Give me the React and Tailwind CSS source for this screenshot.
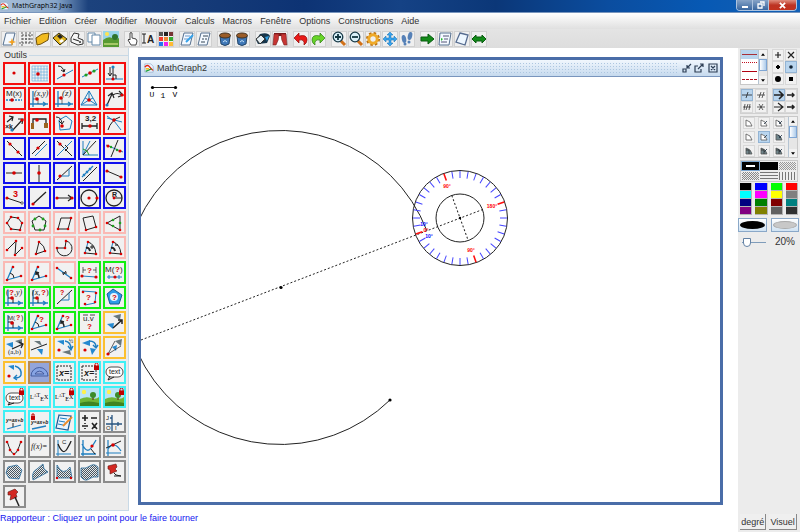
import React, { useState } from 'react';
import clsx from 'clsx';

const RED = '#d80000';
const BLUE = '#1f7fc0';
const INK = '#222222';
const GREEN = '#1fa01f';

// Small drawing helpers shared by every icon
const S = ({ d, c = INK, w = 1, f = 'none', dash }) => (
  <path d={d} stroke={c} strokeWidth={w} fill={f} strokeDasharray={dash} />
);

const D = ({ p, c = RED, r = 1.6 }) => (
  <>
    {p.map(([x, y], i) => (
      <circle key={i} cx={x} cy={y} r={r} fill={c} />
    ))}
  </>
);

const T = ({ x, y, s = 8, c = INK, b, i, serif, children }) => (
  <text
    x={x}
    y={y}
    fontSize={s}
    fill={c}
    fontWeight={b ? 700 : 400}
    fontStyle={i ? 'italic' : 'normal'}
    fontFamily={serif ? 'Liberation Serif, serif' : 'Liberation Sans, sans-serif'}
  >
    {children}
  </text>
);

const Axes = () => <S d="M5 4V20M2 17H20M15 15L18 17L15 19" c={BLUE} w={1.3} />;
const Lock = () => (
  <>
    <S d="M17 5V3.5a1.5 1.5 0 0 1 3 0V5" c="#c00000" />
    <rect x="16" y="4.500" width="5" height="4.500" fill="#c00000" />
  </>
);
const Landscape = () => (
  <>
    <rect x="2" y="2" width="19" height="19" fill="#b9e4f6" />
    <circle cx="6" cy="6" r="2.200" fill="#fff04a" />
    <path d="M2 13Q8 10 13 12T21 11V21H2Z" fill="#6fb536" />
    <path d="M2 17Q10 14 21 17V21H2Z" fill="#3f8420" />
    <path d="M15 14V9" stroke="#6b4a20" strokeWidth="1.500" />
    <circle cx="15" cy="9" r="3" fill="#3c8b2a" />
  </>
);
const Triangle = ({ d, c = '#2589d0' }) => <path d={d} fill={c} />;
const Hatch = ({ d }) => (
  <>
    <path d={d} fill="url(#hatch)" />
    <S d={d} c="#2a6c9c" w={0.8} />
  </>
);
const Box = () => <S d="M4 5H18V19H4Z" dash="2 1" />;
const Latex = () => (
  <T x={2} y={13} s={6} c="#000" serif>
    L<tspan dy="-2" fontSize="4">A</tspan>T<tspan dy="4">E</tspan><tspan dy="-2">X</tspan>
  </T>
);

const R = 'border-[#f50f0f]';
const B = 'border-[#1010ee]';
const P = 'border-[#fab9b4]';
const G = 'border-[#12ee12]';
const O = 'border-[#fcc030]';
const C = 'border-[#3ff0f5]';
const N = 'border-[#8c8c8c]';

const tools = [
  [R, 'Point libre', <D p={[[11, 11]]} />],
  [R, 'Point sur grille', <><S d="M4 4H20M4 7H20M4 10H20M4 13H20M4 16H20M4 19H20M4 4V19M7 4V19M10 4V19M13 4V19M16 4V19M19 4V19" c="#5ba8dc" w={0.6} /><D p={[[10, 12]]} r={1.8} /></>],
  [R, 'Point lié', <><S d="M5 4Q10 4 11 10M8 8L11 10L12 7" /><S d="M4 17L20 8" c={BLUE} /><D p={[[11, 13]]} /></>],
  [R, 'Point sur droite', <><S d="M4 15L20 7" c={BLUE} /><D p={[[8, 13], [16, 9]]} c={GREEN} /><D p={[[12, 11]]} r={1.8} /></>],
  [R, 'Projeté', <><S d="M3 17H20" c={BLUE} /><S d="M7 5V14M10 6V16M5 11L7 14L9 11M10 13H13V17" /><D p={[[10, 5]]} c={BLUE} /><D p={[[10, 17]]} /></>],

  [R, 'Point par abscisse', <><T x={3} y={9}>M(x)</T><S d="M3 13H19" c={BLUE} dash="2 1" w={1.3} /><D p={[[9, 13]]} r={1.8} /></>],
  [R, 'Point par coordonnées', <><Axes /><T x={6} y={9} i serif>(x,y)</T><S d="M5 12H10V17" w={0.6} /><D p={[[9, 12]]} r={1.8} /></>],
  [R, 'Point par affixe', <><Axes /><T x={9} y={9} s={9} i serif>(z)</T><S d="M5 11H9V17" w={0.6} /><D p={[[8, 11]]} r={1.8} /></>],
  [R, 'Barycentre', <><S d="M11 4L3 18H19ZM11 4V13L3 18M11 13L19 18M7 11L11 13L15 11" c={BLUE} /><D p={[[11, 13]]} r={1.8} /></>],
  [R, 'Image de point', <><S d="M4 18L9 7M5 9L9 6L11 11M10 8Q14 5 19 8M16 4L20 8L15 10" w={1.2} /><D p={[[4, 18]]} c={BLUE} /><D p={[[19, 8]]} /></>],

  [R, 'Homothétie de vecteur', <><S d="M4 10L10 5M6 4L10 5L9 9M9 19L20 7M15 7L20 7L19 12" w={1.2} /><T x={2} y={17} s={7} b>×k</T><D p={[[9, 18]]} c={BLUE} /><D p={[[19, 8]]} /></>],
  [R, 'Équilibre', <><S d="M5 12V7H18V12" w={1.3} /><D p={[[9, 8]]} r={1.8} /><rect x="3" y="11" width="3" height="6" fill="#9a6420" /><rect x="16" y="11" width="4" height="5" fill="#9a6420" /></>],
  [R, 'Point intérieur', <><S d="M6 8L13 4L19 9L17 17L7 18Z" c={BLUE} /><S d="M3 5Q8 5 9 11M6 9L9 12L11 9" /><D p={[[9, 14]]} r={1.8} /></>],
  [R, 'Mesure', <><T x={7} y={9} s={8} b>3,2</T><S d="M4 14H19M4 11V17M19 11V17" w={1.3} /><D p={[[12, 14]]} r={1.8} /></>],
  [R, 'Intersection', <><S d="M4 6L19 10M4 4Q12 8 18 18" c={BLUE} /><S d="M17 5Q8 8 5 18" /><D p={[[11, 8]]} r={1.8} /></>],

  [B, 'Droite par deux points', <><S d="M4 4L19 19" /><D p={[[7, 7], [15, 15]]} /></>],
  [B, 'Parallèle', <><S d="M4 17L17 4" /><S d="M7 19L19 7" c={BLUE} /><D p={[[10, 11]]} /></>],
  [B, 'Perpendiculaire', <><S d="M4 4L19 19" /><S d="M4 19L19 4" c={BLUE} /><S d="M12 8L15 11L12 14" /><D p={[[7, 7]]} /></>],
  [B, 'Bissectrice', <><S d="M5 4V18H20M5 18L12 4" c={BLUE} /><S d="M5 18L18 4" /><S d="M5 12Q10 13 11 18" c={GREEN} /></>],
  [B, 'Médiatrice', <><S d="M3 8L20 15" c={BLUE} /><S d="M15 3L8 20" /><D p={[[5, 9], [17, 14]]} /><D p={[[8, 10], [14, 13]]} c={GREEN} r={1.2} /></>],

  [B, 'Horizontale', <><S d="M3 11H19" /><D p={[[11, 11]]} r={1.8} /></>],
  [B, 'Verticale', <><S d="M11 3V20" /><D p={[[11, 11]]} r={1.8} /></>],
  [B, 'Droite par pente', <><S d="M4 18L19 4" /><S d="M7 14H16V7" c={BLUE} /><D p={[[7, 14]]} /></>],
  [B, 'Droite par équation', <><S d="M5 19L19 5" /><S d="M4 15L15 4M5 12L7 14M8 9L10 11M11 6L13 8" c={BLUE} w={1.3} /></>],
  [B, 'Segment', <><S d="M4 9L18 15" /><D p={[[4, 9], [18, 15]]} /></>],

  [B, 'Segment de longueur donnée', <><T x={10} y={10} s={9} b c={RED}>3</T><S d="M4 11L19 16" /><D p={[[4, 11]]} /><circle cx="19" cy="16" r="1.200" fill="#fff" stroke={INK} strokeWidth=".7" /></>],
  [B, 'Demi-droite', <><S d="M5 17L18 5" w={1.2} /><D p={[[5, 17]]} /></>],
  [B, 'Vecteur', <><S d="M4 11H19M15 8L19 11L15 14" w={1.2} /><D p={[[4, 11], [19, 11]]} /></>],
  [B, 'Cercle par point', <><circle cx="11" cy="11" r="8" fill="none" stroke={INK} strokeWidth="1.300" /><D p={[[11, 11], [19, 11]]} /></>],
  [B, 'Cercle par rayon', <><circle cx="11" cy="11" r="8" fill="none" stroke={INK} strokeWidth="1.300" /><S d="M11 11H19" /><T x={9} y={10} s={7} b>R</T><D p={[[11, 11]]} r={1.4} /></>],

  [P, 'Polygone', <><S d="M8 5L15 6L19 11L17 18L8 17L4 11Z" /><D p={[[8, 5], [15, 6], [19, 11], [17, 18], [8, 17], [4, 11]]} r={1.3} /></>],
  [P, 'Polygone régulier', <><S d="M11 4L18 9L16 18H7L4 9Z" /><D p={[[7, 7], [15, 7], [17, 14], [12, 18], [5, 14]]} c={GREEN} r={1.4} /></>],
  [P, 'Parallélogramme', <><S d="M8 6H18L15 17H5Z" /><D p={[[18, 6], [15, 17], [5, 17]]} r={1.3} /></>],
  [P, 'Carré', <><S d="M5 6L15 4L18 15L8 18Z" /><D p={[[8, 18], [18, 15]]} r={1.3} /></>],
  [P, 'Triangle équilatéral', <><S d="M4 11L17 4V18Z" /><D p={[[4, 11], [17, 18]]} r={1.3} /><D p={[[10, 8], [10, 14], [17, 11]]} c={GREEN} r={1.3} /></>],

  [P, 'Ligne brisée', <><S d="M4 13L13 4L12 18L19 11" /><D p={[[4, 13], [13, 4], [12, 18], [19, 11]]} r={1.3} /></>],
  [P, 'Arc de cercle', <><S d="M11 5Q17 9 17 14L8 17L11 5" /><D p={[[11, 5], [17, 14], [8, 17]]} r={1.3} /></>],
  [P, 'Grand arc', <><S d="M4 11A7.500 7.500 0 1 0 13 4L12 11Z" /><D p={[[13, 4], [12, 11], [4, 11]]} r={1.3} /></>],
  [P, 'Arc direct', <><S d="M10 5Q17 7 18 17L7 16" /><S d="M10 5L7 16" c={BLUE} /><S d="M14 8V12M12 10H16" /><S d="M8 11Q11 10 12 14" w={2} /><D p={[[10, 5], [7, 16], [18, 17]]} r={1.3} /></>],
  [P, 'Arc indirect', <><S d="M10 5Q17 7 18 17L7 16" /><S d="M10 5L7 16" c={BLUE} /><S d="M8 11Q11 10 12 14" w={2} /><S d="M12 8H15" w={1.2} /><D p={[[10, 5], [7, 16], [18, 17]]} r={1.3} /></>],

  [P, 'Angle', <><S d="M4 18L10 4M4 18L18 14" c={BLUE} w={1.3} /><S d="M7 11Q11 12 11 16" /><D p={[[10, 5], [4, 18], [18, 14]]} r={1.3} /></>],
  [P, 'Angle orienté', <><S d="M4 18L10 4M4 18L18 14" c={BLUE} w={1.3} /><S d="M8 11Q11 12 11 16M8 13L8 10L11 11" w={1.5} /><D p={[[10, 5], [4, 18], [18, 14]]} r={1.3} /></>],
  [P, 'Marque de segment', <><S d="M4 6L18 16" c={BLUE} w={1.3} /><S d="M10 13L13 9M9 11L14 11" /><D p={[[4, 6], [18, 16]]} r={1.3} /></>],
  [G, 'Longueur', <><S d="M5 8H8M15 8H18M5 5V11M18 5V11" w={0.7} /><T x={9} y={11} s={8} b c={RED}>?</T><S d="M4 14L18 15" c={BLUE} /><D p={[[4, 14], [18, 15]]} /></>],
  [G, 'Abscisse', <><T x={2} y={10} s={8}>M(</T><T x={12} y={10} s={8} b c={RED}>?</T><T x={17} y={10} s={8}>)</T><S d="M4 15H19M6 13V17M16 13V17" c={BLUE} /><D p={[[12, 15]]} /></>],

  [G, "Abscisse d'un point", <><Axes /><T x={6} y={9} b c={RED}>?</T><T x={3} y={9} serif>(</T><T x={11} y={9} i serif>,y)</T><S d="M5 12H10V17" /><D p={[[9, 12]]} r={1.8} /></>],
  [G, "Ordonnée d'un point", <><Axes /><T x={4} y={9} i serif>(x,</T><T x={13} y={9} b c={RED}>?</T><T x={18} y={9} serif>)</T><S d="M5 12H10V17" /><D p={[[9, 12]]} r={1.8} /></>],
  [G, 'Pente', <><S d="M4 18L19 4" /><S d="M8 14H16V7" c={BLUE} /><T x={7} y={9} b c={RED} s={7}>?</T></>],
  [G, 'Longueur de ligne', <><S d="M4 5L18 6L17 17L7 19" c={BLUE} /><T x={8} y={14} b c={RED}>?</T><D p={[[5, 6], [18, 7], [17, 16], [7, 18]]} r={1.3} /></>],
  [G, 'Aire', <><path d="M10 3L19 9L16 18L7 18L4 8Z" fill="#2d9be8" stroke="#155c92" /><circle cx="11" cy="11" r="4" fill="#e8f4fc" /><T x={9} y={14} b c={RED}>?</T></>],

  [G, 'Affixe', <><Axes /><T x={5} y={9} s={6}>M(</T><T x={13} y={9} s={7} b c={RED}>?</T><T x={18} y={9} s={7}>)</T><S d="M5 11H10V17" /><D p={[[9, 12]]} r={1.8} /></>],
  [G, "Mesure d'angle", <><S d="M4 18L10 4M4 18L18 14" c={BLUE} w={1.3} /><T x={11} y={11} s={8} b c={RED}>?</T><S d="M7 11Q11 12 11 16" /><D p={[[10, 5], [4, 18], [18, 14]]} r={1.3} /></>],
  [G, "Mesure d'angle orienté", <><S d="M4 18L10 4M4 18L18 14" c={BLUE} w={1.3} /><T x={12} y={10} s={8} b c={RED}>?</T><S d="M8 11Q11 12 11 16M8 13V10L11 11" w={1.4} /><D p={[[10, 5], [4, 18], [18, 14]]} r={1.3} /></>],
  [G, 'Produit scalaire', <><T x={5} y={10} s={8}>u.v</T><S d="M5 4H10M12 4H17" w={0.8} /><T x={9} y={18} s={8} b c={RED}>?</T></>],
  [O, 'Translation', <><Triangle d="M4 13L10 18L11 12Z" /><Triangle d="M10 5L17 9L18 3Z" c="#68777c" /><S d="M10 17L19 9M15 9H19V13" w={1.5} /></>],

  [O, 'Translation par vecteur', <><Triangle d="M3 8L10 12L10 6Z" /><Triangle d="M12 5L19 9V3Z" c="#68777c" /><S d="M9 13L20 8M16 6L20 8L18 12" w={1.3} /><T x={5} y={18} s={7} serif>(a,b)</T></>],
  [O, 'Symétrie axiale', <><Triangle d="M6 5L14 10L12 5Z" c="#68777c" /><S d="M3 14L19 8" /><Triangle d="M9 13L15 13L14 19Z" /></>],
  [O, 'Rotation', <><Triangle d="M4 5L11 9V4Z" /><S d="M12 5Q18 6 18 13M15 10L18 14L20 10" c={BLUE} w={1.4} /><Triangle d="M9 16L18 19L17 14Z" c="#68777c" /><D p={[[6, 14]]} /><T x={16} y={7} s={5}>½</T></>],
  [O, 'Rotation par angle', <><Triangle d="M4 7L12 10V4Z" /><S d="M11 5Q18 5 18 11M15 9L18 12L20 9" c={BLUE} w={1.4} /><Triangle d="M12 12L18 13L14 19Z" /><D p={[[7, 14]]} /></>],
  [O, 'Homothétie', <><Triangle d="M12 5L19 3L18 10Z" c="#68777c" /><Triangle d="M9 11L14 9L13 15Z" /><S d="M5 18L12 5M5 18L18 10" w={0.7} /><D p={[[5, 18]]} /></>],

  [O, 'Similitude', <><Triangle d="M5 5L11 9V4Z" /><S d="M12 5Q19 7 18 14Q17 17 12 17M14 14L11 17L14 19" c={BLUE} w={1.4} /><D p={[[6, 15]]} /></>],
  ['border-[#b98c50]', 'Rapporteur', <path fillRule="evenodd" d="M3 15A8.500 8.500 0 0 1 20 15ZM7 13A5 5 0 0 1 16 13Z" fill="#87a4e4" stroke="#334c91" strokeWidth=".8" />],
  [C, 'Valeur', <><Box /><T x={6} y={15} b i s={9}>x=</T></>],
  [C, 'Valeur protégée', <><Box /><T x={6} y={15} b i s={9}>x=</T><Lock /></>],
  [C, 'Texte', <><rect x="3" y="6" width="17" height="10" rx="5" fill="#fff" stroke={INK} strokeWidth=".8" /><S d="M7 15L5 19L11 16" /><T x={6} y={13} s={7}>text</T></>],

  [C, 'Texte protégé', <><rect x="3" y="7" width="17" height="10" rx="5" fill="#fff" stroke={INK} strokeWidth=".8" /><S d="M7 16L5 19L11 17" /><T x={6} y={14} s={7}>text</T><Lock /></>],
  [C, 'LaTeX', <Latex />],
  [C, 'LaTeX protégé', <><Latex /><Lock /></>],
  [C, 'Image', <Landscape />],
  [C, 'Image protégée', <><Landscape /><Lock /></>],

  [C, 'Équation', <><T x={3} y={11} s={5} b i>y=ax+b</T><S d="M4 18L18 14" c={BLUE} w={1.3} /><S d="M10 12V16" /></>],
  [C, 'Équation protégée', <><T x={3} y={13} s={5} b i>y=ax+b</T><S d="M4 18L18 15" c={BLUE} w={1.3} /><rect x="3" y="5" width="4" height="4" fill="#c00000" /><S d="M4 5V3H6V5" c="#c00000" /></>],
  [C, 'Commentaire', <><path d="M6 4L18 5L15 19L3 17Z" fill="#e8f5ff" stroke="#185c96" strokeWidth="1.200" /><S d="M7 7L14 8M6 10L12 11M5 13L10 14" c={BLUE} /><S d="M10 15L19 6" c="#e98d2e" w={2} /></>],
  [N, 'Calcul', <S d="M4 7H10M7 4V10M13 7H19M4 15H10M14 12L19 18M19 12L14 18M7 12V13M7 17V18" w={1.6} />],
  [N, 'Repère', <><S d="M9 4V20M3 13H19M7 7H9M15 11V15" c="#285580" w={1.3} /><T x={3} y={9} s={6}>J</T><T x={3} y={19} s={6}>O</T><T x={12} y={19} s={6}>I</T></>],

  [N, 'Courbe par points', <><S d="M4 5Q8 18 11 18T18 5" /><D p={[[4, 6], [7, 14], [11, 18], [15, 14], [18, 6]]} r={1.3} /></>],
  [N, 'Fonction', <T x={3} y={13} s={8} i serif>f(x)=</T>],
  [N, 'Courbe', <><S d="M5 4V20M3 18H18" c={BLUE} /><S d="M5 8Q10 20 14 13T18 5" w={1.3} /><T x={9} y={8} s={6}>C</T></>],
  [N, 'Point sur courbe', <><S d="M5 4V20M3 18H18M4 8Q9 18 13 12T18 4" c={BLUE} w={1.3} /><S d="M13 13L17 18" /><D p={[[14, 10]]} /></>],
  [N, 'Tangente', <><S d="M5 4V20M3 17H18M5 13Q11 4 18 15" c={BLUE} w={1.2} /><S d="M3 12L18 5" /><D p={[[10, 9]]} r={1.8} /></>],

  [N, 'Surface polygone', <Hatch d="M5 6L14 4L19 9L16 18L6 17L3 12Z" />],
  [N, 'Surface', <Hatch d="M5 19Q3 11 9 8L15 3L16 8L20 11Z" />],
  [N, 'Surface sous courbe', <><Hatch d="M4 17V4Q10 16 17 6L19 17Z" /><D p={[[4, 17], [18, 17]]} r={1.2} /></>],
  [N, 'Surface entre courbes', <Hatch d="M3 7Q8 8 12 5T20 6V16Q15 15 11 18T3 16Z" />],
  [N, 'Punaise horizontale', <><path d="M5 5L13 3L14 6L12 8L14 10L7 13L7 9L5 8Z" fill="#d32822" stroke="#5b1713" strokeWidth=".6" /><S d="M11 12L13 14L18 15M11 15H18" /></>],

  [N, 'Punaise', <><path d="M5 6L12 3L15 6L13 8L14 11L7 14L8 9L5 9Z" fill="#d32822" stroke="#5b1713" strokeWidth=".6" /><S d="M12 11L16 20" w={1.5} /></>],
];

const menus = ['Fichier', 'Edition', 'Créer', 'Modifier', 'Mouvoir', 'Calculs', 'Macros', 'Fenêtre', 'Options', 'Constructions', 'Aide'];

const Sheet = ({ children }) => (
  <>
    <path d="M5 2H14L11 14H2Z" fill="#f4f9ff" stroke="#56708f" />
    {children}
  </>
);
const Bucket = () => (
  <>
    <path d="M3 5L4 13Q8 16 12 13L13 5Z" fill="#3f78b8" stroke="#234567" />
    <ellipse cx="8" cy="4.500" rx="5.500" ry="2.500" fill="#9a5c28" stroke="#43311f" />
    <path d="M6 11Q8 8 10 11" stroke="#c5e2f6" fill="none" />
  </>
);
const Magnifier = ({ d }) => (
  <>
    <path d="M9 9L14 14" stroke="#d07018" strokeWidth="3" />
    <circle cx="7" cy="6" r="4.800" fill="#d8eff8" stroke="#183a48" strokeWidth="1.300" />
    <path d={d} stroke="#123640" strokeWidth="1.800" />
  </>
);

const swatches = ['#555', '#222', '#733', '#f23b2c', '#e83', '#3a3', '#27e', '#e2e', '#fb3'];

const toolbar = [
  [
    ['Nouvelle figure', <><Sheet /><path d="M11 7L12 10L15 11L12 12L11 15L10 12L7 11L10 10Z" fill="#f4a11e" /></>],
    ['Nouveau repère', <path d="M4 1V15M1 12H15M4 4H15M4 8H15M8 1V12M12 1V12" stroke="#333" strokeWidth=".8" strokeDasharray="2 1" />],
    ['Ouvrir', <path d="M1 7L7 3L14 2L13 9L6 13L2 14Z" fill="#f2bb20" stroke="#70510c" />],
    ['Enregistrer', <><path d="M1 7L7 2L15 8L8 14Z" fill="#e2b51a" stroke="#373115" /><path d="M5 5L8 3L11 6L8 8Z" fill="#222" /><path d="M7 10L10 8L12 10L9 12Z" fill="#fff" /></>],
    ['Imprimer', <><path d="M2 7L5 2L10 3L9 7L14 9V13L9 14L2 11Z" fill="#f6f6f6" stroke="#333" /><path d="M4 8L10 10" stroke="#333" strokeWidth="1.200" /><circle cx="11" cy="11" r="1" fill="#333" /></>],
    ['Copier', <><path d="M2 2H9V11H2Z" fill="#fff" stroke="#6489a9" /><path d="M6 4H14V14H6Z" fill="#fff" stroke="#6489a9" /></>],
    ['Image de fond', <><path d="M0 0H16V16H0Z" fill="#99d4e9" /><circle cx="4" cy="3" r="2" fill="#ffe450" /><path d="M0 9Q5 5 9 7T16 7V16H0Z" fill="#579a32" /><circle cx="12" cy="6" r="3" fill="#2f742c" /><path d="M1 13H15" stroke="#a5c867" strokeWidth="2" /></>],
  ],
  [
    ['Main', <path d="M6 9V2Q7 1 8 2V7L12 8Q14 9 12 14H7L4 9Q5 7 6 9Z" fill="#fff" stroke="#333" strokeWidth=".9" />],
    ['Nommer', <><path d="M3 3V12M1 3H5M1 12H5" stroke="#222" /><T x={6} y={12} s={10} b>A</T></>],
    ['Couleurs', <>{swatches.map((c, i) => <rect key={i} x={1 + (i % 3) * 5} y={1 + Math.floor(i / 3) * 5} width="4" height="4" fill={c} />)}</>],
  ],
  [
    ['Modifier le style', <Sheet><path d="M6 5H11M5 8H9" stroke="#6899cc" /><path d="M7 11L14 4" stroke="#36a2ea" strokeWidth="2" /></Sheet>],
    ['Propriétés', <Sheet><path d="M7 5H12M6 8H8M9 8H11M5 11H9" stroke="#345" /></Sheet>],
  ],
  [
    ['Corbeille', <Bucket />],
    ['Vider la corbeille', <Bucket />],
  ],
  [
    ['Gomme', <><path d="M5 3Q13 1 15 5L12 12L3 13L1 9Z" fill="#17364c" /><path d="M1 8L6 4L10 8L5 13Z" fill="#e4eff4" stroke="#333" /><path d="M10 6L14 5L12 10Z" fill="#2f9bdb" /></>],
    ['Masquer', <><path d="M5 4H11V14H5Z" fill="#fff" /><path d="M2 2H14V5H2Z" fill="#7e1717" /><path d="M2 3H7Q7 9 4 14H1ZM14 3H9Q9 9 12 14H15Z" fill="#c73532" stroke="#722" strokeWidth=".6" /></>],
  ],
  [
    ['Annuler', <path d="M1 7L6 2V5Q14 3 14 9Q14 12 11 14Q12 8 6 9V12Z" fill="#e91b19" stroke="#8c0806" strokeWidth=".7" />],
    ['Refaire', <path d="M15 7L10 2V5Q2 3 2 9Q2 12 5 14Q4 8 10 9V12Z" fill="#68d528" stroke="#2b7a13" strokeWidth=".7" />],
  ],
  [
    ['Zoom avant', <Magnifier d="M4 6H10M7 3V9" />],
    ['Zoom arrière', <Magnifier d="M4 6H10" />],
    ['Options', <><circle cx="8" cy="8" r="6" fill="none" stroke="#b96f10" strokeWidth="2" strokeDasharray="2.5 2.2" /><circle cx="8" cy="8" r="4.200" fill="none" stroke="#efaa29" strokeWidth="3" /></>],
    ['Déplacer', <path d="M8 1L11 4H9V7H12V5L15 8L12 11V9H9V12H11L8 15L5 12H7V9H4V11L1 8L4 5V7H7V4H5Z" fill="#36a3ef" stroke="#176dab" strokeWidth=".5" />],
    ['Traces', <><ellipse cx="5" cy="8" rx="2.200" ry="4" fill="#5681b7" transform="rotate(-12 5 8)" /><circle cx="6" cy="13" r="1.500" fill="#5681b7" /><ellipse cx="11" cy="5" rx="2.200" ry="4" fill="#5681b7" transform="rotate(14 11 5)" /><circle cx="10" cy="11" r="1.500" fill="#5681b7" /></>],
  ],
  [
    ['Suivant', <path d="M1 6H8V3L14 8L8 13V10H1Z" fill="#138b19" stroke="#095c10" />],
    ['Liste', <><path d="M3 2H14L12 14H2Z" fill="#f4f9ff" stroke="#56708f" /><path d="M6 5H12M7 8H11M4 11H10" stroke="#557" /><path d="M4 7L6 8L4 10Z" fill="#2b2" /></>],
    ['Note', <path d="M6 2L14 4L11 14L2 11Z" fill="#eef7ff" stroke="#566c90" strokeWidth="1.300" />],
    ['Largeur', <path d="M1 8L5 4V6H11V4L15 8L11 12V10H5V12Z" fill="#138b19" stroke="#095c10" />],
  ],
];

const ToolbarButton = ({ label, icon }) => (
  <button aria-label={label} className="h-4 w-4 border border-[#d0d0d0] bg-[#efefef]">
    <svg viewBox="0 0 16 16" fill="none" className="-m-px h-4 w-4">{icon}</svg>
  </button>
);

const AppIcon = ({ className }) => (
  <svg viewBox="0 0 12 12" className={className}>
    <path d="M1 1H8L11 4V11H1Z" fill="#eef6ff" stroke="#7d9dc0" strokeWidth=".7" />
    <path d="M1 5Q4 1 7 5T11 8" fill="none" stroke="#e32414" strokeWidth="1.600" />
    <path d="M2 10L9 7" stroke="#22a03a" strokeWidth="1.800" />
    <path d="M2 7L6 7" stroke="#f4b912" strokeWidth="1.800" />
  </svg>
);

// Protractor ticks every ten degrees, red on each quarter turn
const Protractor = ({ x, y, angle }) => (
  <g transform={`translate(${x} ${y})`}>
    <circle r="47.500" fill="none" stroke="#222" />
    <circle r="24" fill="none" stroke="#222" />
    <g transform={`rotate(${angle})`}>
      {Array.from({ length: 36 }, (_, i) => (
        <line
          key={i}
          x1={40}
          x2={47}
          y1={0}
          y2={0}
          transform={`rotate(${i * 10})`}
          stroke={i % 9 === 0 ? '#ff1010' : '#4444ff'}
          strokeWidth={i % 9 === 0 ? 1.6 : 1}
        />
      ))}
      <path d="M0 -24V24" stroke="#222" strokeDasharray="2 2" />
    </g>
    <g fontFamily="Liberation Sans, sans-serif" fontSize="5" fontWeight="700" textAnchor="middle">
      <g fill="#f00">
        <text x="-13" y="-30">90°</text>
        <text x="32" y="-10">180°</text>
        <text x="11" y="34">90°</text>
        <text x="-34" y="14">0°</text>
      </g>
      <g fill="#00f">
        <text x="-36" y="8">10°</text>
        <text x="-31" y="20">10°</text>
      </g>
    </g>
    <circle r="1.200" fill="#000" />
  </g>
);

const Figure = () => (
  <svg className="min-h-0 w-full flex-1 bg-white" fill="none">
    <path d="M11.500 10.500H34.500" stroke="#222" />
    <D p={[[11.5, 10.5], [34.5, 10.5]]} c="#000" />
    <g fontFamily="Liberation Mono, monospace" fontSize="8" fill="#000" textAnchor="middle">
      <text x="11" y="20">U</text>
      <text x="22" y="21">1</text>
      <text x="34" y="20">V</text>
    </g>
    <path d="M286 154A157 157 0 1 0 249 323" stroke="#222" />
    <path d="M0 263L343 132" stroke="#222" strokeDasharray="2 2" />
    <D p={[[140, 210.5], [249, 323]]} c="#000" />
    <Protractor x={319} y={141} angle={-20} />
  </svg>
);

const MiniButton = ({ label, active, children }) => (
  <button
    aria-label={label}
    className={clsx('flex h-3 w-3 items-center justify-center border', active ? 'border-[#93b4d4] bg-[#b9d5ee]' : 'border-[#d8d8d8] bg-[#f1f1f1]')}
  >
    <svg viewBox="0 0 10 10" className="h-[10px] w-[10px] shrink-0" fill="none">{children}</svg>
  </button>
);

const ScrollBar = () => (
  <div className="flex w-[9px] flex-col border-l border-[#b5c4d2] bg-[#e6e6e6]">
    <button aria-label="Haut" className="flex h-2 items-center justify-center bg-[#f2f2f2]">
      <svg viewBox="0 0 6 4" className="h-[3px] w-1"><path d="M0 4L3 0L6 4Z" /></svg>
    </button>
    <div className="mt-px h-3 border border-[#7fa6d4] bg-linear-to-r from-white to-[#adcbea]" />
    <button aria-label="Bas" className="mt-auto flex h-2 items-center justify-center bg-[#f2f2f2]">
      <svg viewBox="0 0 6 4" className="h-[3px] w-1"><path d="M0 0L3 4L6 0Z" /></svg>
    </button>
  </div>
);

const markers = [
  ['Croix droite', <S d="M5 2V8M2 5H8" w={1.2} />],
  ['Croix', <S d="M2 2L8 8M8 2L2 8" w={1.2} />],
  ['Losange', <path d="M5 3L7 5L5 7L3 5Z" fill="#000" stroke="#000" />],
  ['Petit point', <circle cx="5" cy="5" r="1.800" fill="#123" />],
  ['Gros point', <circle cx="5" cy="5" r="3" fill="#000" />],
  ['Carré plein', <path d="M3 3H7V7H3Z" fill="#000" />],
];
const ticks = [
  ['Une marque', <S d="M0 5H10M4 8L6 2" w={0.8} />],
  ['Deux marques', <S d="M1 5H9M3 8L5 2M6 8L8 2" w={0.7} />],
  ['Trois marques', <S d="M1 5H9M2 8L3 2M4 8L6 2M7 8L8 2" w={0.7} />],
  ['Marque croisée', <S d="M1 5H9M3 2L7 8M7 2L3 8" w={0.7} />],
];
const arrows = [
  ['Grande flèche pleine', <S d="M0 5H9M5 1L9 5L5 9" w={1.6} />],
  ['Petite flèche pleine', <S d="M1 5H8M6 3L8 5L6 7" w={1.4} />],
  ['Grande flèche', <S d="M0 5H9M4 1L9 5L4 9" w={1.2} />],
  ['Petite flèche', <S d="M1 5H8M6 3L8 5L6 7" w={1.6} />],
];
const lines = [
  ['Trait fin', 'h-px bg-[#a83038]'],
  ['Pointillé fin', 'border-t border-dotted border-[#c01020]'],
  ['Trait épais', 'h-px bg-[#b00010]'],
  ['Tirets', 'border-t border-dashed border-[#b01020]'],
];
const fills = [
  ['Contour', 'border-x-4 border-y-[3px] border-black bg-white outline outline-[#7fa8d0]'],
  ['Plein', 'bg-black'],
  ['Trame claire', 'bg-[repeating-conic-gradient(#999_0_25%,#eee_0_50%)] bg-[length:2px_2px]'],
  ['Trame', 'bg-[repeating-conic-gradient(#888_0_25%,#eee_0_50%)] bg-[length:2px_2px]'],
  ['Horizontal', 'bg-[repeating-linear-gradient(#777_0_1px,#eee_1px_3px)]'],
  ['Vertical', 'bg-[repeating-linear-gradient(90deg,#777_0_1px,#eee_1px_3px)]'],
];
const colors = [
  ['Noir', 'bg-black'], ['Bleu', 'bg-[#0000ff]'], ['Vert', 'bg-[#00ff00]'], ['Rouge', 'bg-[#ff0000]'],
  ['Cyan', 'bg-[#00ffff]'], ['Magenta', 'bg-[#ff00ff]'], ['Jaune', 'bg-[#ffff00]'], ['Gris', 'bg-[#808080]'],
  ['Bleu foncé', 'bg-[#000080]'], ['Vert foncé', 'bg-[#008000]'], ['Brun', 'bg-[#800000]'], ['Sarcelle', 'bg-[#008080]'],
  ['Violet', 'bg-[#800080]'], ['Olive', 'bg-[#808000]'], ['Gris moyen', 'bg-[#606060]'], ['Gris foncé', 'bg-[#303030]'],
];

const AngleIcon = ({ n }) => (
  <>
    <path d="M2 8V2Q7 3 8 8Z" stroke="#555" strokeWidth=".8" fill={n > 4 ? '#6f858b' : '#fff'} />
    {n % 3 > 0 && <path d="M5 6L8 3" stroke="#234" strokeWidth=".8" />}
    {n % 3 > 1 && <path d="M4 3L7 6" stroke="#234" strokeWidth=".8" />}
    {n > 5 && <path d="M2 4H5V8" stroke="#333" strokeWidth=".8" />}
  </>
);

const StylePanel = () => {
  const [opacity, setOpacity] = useState(20);
  return (
    <aside className="flex w-[62px] shrink-0 flex-col bg-[#ececec] pt-px">
      <div className="flex gap-1 pl-0.5">
        <div className="flex h-9 w-7 border border-[#c8c8c8] bg-white">
          <div className="flex flex-1 flex-col">
            {lines.map(([label, cls], i) => (
              <button key={label} aria-label={label} className={clsx('flex flex-1 items-center px-px', i === 0 && 'bg-[#b9d5ee]')}>
                <span className={clsx('w-full', cls)} />
              </button>
            ))}
          </div>
          <ScrollBar />
        </div>
        <div className="grid grid-cols-2 gap-x-px">
          {markers.map(([label, icon], i) => <MiniButton key={label} label={label} active={i === 3}>{icon}</MiniButton>)}
        </div>
      </div>

      <div className="mt-[3px] flex gap-1 pl-0.5">
        <div className="grid w-7 grid-cols-2 gap-x-px border border-[#d0d0d0]">
          {ticks.map(([label, icon], i) => <MiniButton key={label} label={label} active={i === 0}>{icon}</MiniButton>)}
        </div>
        <div className="grid grid-cols-2 border border-[#d0d0d0]">
          {arrows.map(([label, icon], i) => <MiniButton key={label} label={label} active={i === 0}>{icon}</MiniButton>)}
        </div>
      </div>

      <div className="mx-0.5 mt-0.5 flex justify-between border border-[#c8c8c8] pl-0.5">
        <div className="grid grid-cols-3 gap-x-[3px] gap-y-0.5">
          {Array.from({ length: 9 }, (_, n) => (
            <MiniButton key={n} label={`Angle ${n + 1}`} active={n === 4}><AngleIcon n={n} /></MiniButton>
          ))}
        </div>
        <ScrollBar />
      </div>

      <div className="mx-0.5 mt-0.5 grid grid-cols-3 gap-x-px gap-y-0.5 border border-[#c8c8c8] p-px">
        {fills.map(([label, cls]) => <button key={label} aria-label={label} className={clsx('h-2', cls)} />)}
      </div>

      <div className="mx-0.5 mt-px grid grid-cols-4 gap-x-[3px]">
        {colors.map(([label, cls]) => <button key={label} aria-label={label} className={clsx('h-2 border-r border-b border-[#b4b4b4]', cls)} />)}
      </div>

      <div className="mt-[3px] flex gap-1 pr-px">
        <button aria-label="Opaque" className="h-[14px] flex-1 border border-[#8aa8c8] bg-linear-to-b from-white to-[#d0e2f2] px-px py-0.5">
          <span className="block h-full rounded-[50%] bg-black" />
        </button>
        <button aria-label="Transparent" className="h-[14px] flex-1 border border-[#8aa8c8] bg-linear-to-b from-white to-[#d0e2f2] px-px py-0.5">
          <span className="block h-full rounded-[50%] border border-[#aaa] bg-[#c8c8c8]" />
        </button>
      </div>

      <div className="mt-1 flex items-center justify-between pr-[5px] pl-1">
        <input
          type="range"
          aria-label="Opacité"
          min="15"
          max="100"
          value={opacity}
          onChange={(e) => setOpacity(Number(e.target.value))}
          className="h-3 w-6 appearance-none bg-[linear-gradient(#7f9cba,#7f9cba)] bg-[length:100%_1px] bg-center bg-no-repeat [&::-webkit-slider-thumb]:h-[9px] [&::-webkit-slider-thumb]:w-2 [&::-webkit-slider-thumb]:appearance-none [&::-webkit-slider-thumb]:rounded-b-full [&::-webkit-slider-thumb]:border [&::-webkit-slider-thumb]:border-[#6382a5] [&::-webkit-slider-thumb]:bg-white"
        />
        <output className="text-[10px] leading-3">{opacity}%</output>
      </div>

      <div className="mt-auto flex gap-[3px] pr-[3px] pb-0.5 pl-0.5">
        {['degré', 'Visuel'].map(label => (
          <button key={label} className="h-4 flex-auto border-r border-b border-[#888] bg-[#efefef] leading-3">{label}</button>
        ))}
      </div>
    </aside>
  );
};

const ToolPanel = () => (
  <section className="flex w-[129px] shrink-0 flex-col border-r border-b border-[#c8d9e6] bg-[#ececec]">
    <div className="flex items-center gap-0.5 pl-1">
      <h2 className="leading-[14px]">Outils</h2>
      <span className="h-px flex-1 bg-[#c8d9e6]" />
    </div>
    <div className="grid flex-1 grid-cols-5 grid-rows-[repeat(18,minmax(0,1fr))] gap-0.5 pr-0.5 pb-0.5 pl-[3px]">
      {tools.map(([border, label, icon]) => (
        <button key={label} aria-label={label} className={clsx('min-h-0 border-2', border, label === 'Rapporteur' ? 'bg-[#93a5db]' : 'bg-[#f1f1f1]')}>
          <svg viewBox="2 2 19 18" fill="none" className="h-[18px] w-full">{icon}</svg>
        </button>
      ))}
    </div>
  </section>
);

const App = () => (
  <div className="flex min-h-screen flex-col bg-white font-['Liberation_Sans',Arial,sans-serif] text-[9px] text-[#333]">
    <svg className="absolute h-0 w-0" aria-hidden="true">
      <defs>
        <pattern id="hatch" width="2" height="2" patternUnits="userSpaceOnUse">
          <rect width="2" height="2" fill="#e5e9ec" />
          <path d="M0 0H1V1H0ZM1 1H2V2H1Z" fill="#47545e" />
        </pattern>
      </defs>
    </svg>

    {/* Title bar */}
    <header className="flex h-[13px] items-start justify-between border-b border-[#7895bd] bg-[linear-gradient(90deg,#a9bfd8_0%,#86a5c9_7%,#1c427d_11%,#163b78_24%,#0d3374_38%,#154285_50%,#0b3778_62%,#0b4d9f_76%,#0759b4_88%,#1460b4_100%)]">
      <div className="flex h-3 items-center gap-[3px]">
        <AppIcon className="h-2.5 w-[9px]" />
        <h1 className="font-['Open_Sans','Liberation_Sans',sans-serif] text-[7px] leading-3 text-black">MathGraph32 Java</h1>
      </div>
      <div className="mr-[3px] flex h-[11px] overflow-hidden rounded-b-sm border border-t-0 border-[#acc3df]">
        <button aria-label="Réduire" className="flex w-4 items-center justify-center border-r border-[#acc3df] bg-linear-to-b from-[#86a3c7] to-[#3a679f]">
          <span className="mt-1 h-0.5 w-1.5 bg-white" />
        </button>
        <button aria-label="Agrandir" className="flex w-4 items-center justify-center border-r border-[#acc3df] bg-linear-to-b from-[#86a3c7] to-[#3a679f]">
          <svg viewBox="0 0 8 8" className="h-2 w-2" fill="none"><path d="M3 1H7V5M1 3H5V7H1Z" stroke="#fff" strokeWidth="1.300" /></svg>
        </button>
        <button aria-label="Fermer" className="flex w-[27px] items-center justify-center bg-linear-to-b from-[#df8d7e] via-[#bd3323] to-[#c3321e]">
          <svg viewBox="0 0 8 8" className="h-[7px] w-[7px]"><path d="M1 1L7 7M7 1L1 7" stroke="#fff" strokeWidth="2" /></svg>
        </button>
      </div>
    </header>

    <nav className="flex h-4 items-center gap-2 bg-linear-to-b from-white to-[#e0e0e0] pl-1">
      {menus.map(menu => (
        <button key={menu} className="leading-4">{menu}</button>
      ))}
    </nav>

    {/* Toolbar */}
    <div className="flex h-[19px] items-center gap-[5px] bg-linear-to-b from-[#e4e4e4] to-[#dddddd] pl-px">
      {toolbar.map((group, i) => (
        <div key={i} className="flex gap-px">
          {group.map(([label, icon]) => <ToolbarButton key={label} label={label} icon={icon} />)}
        </div>
      ))}
    </div>

    <div className="flex flex-1">
      <div className="flex min-w-0 flex-1 flex-col">
        <div className="flex flex-1">
          <ToolPanel />
          <main className="mt-[9px] mr-[15px] mb-[6px] ml-[9px] flex min-w-0 flex-1 flex-col border-[3px] border-[#4a6da8]">
            <div className="flex h-[17px] items-center gap-[3px] border-b border-[#7995bd] bg-linear-to-b from-[#f1f7fd] to-[#c6daee] pr-0.5 pl-[3px]">
              <AppIcon className="h-2.5 w-2.5" />
              <h2 className="leading-4">MathGraph2</h2>
              <div className="h-3 flex-1 bg-[radial-gradient(#adc6e0_35%,transparent_40%)] bg-[length:3px_3px]" />
              <div className="flex gap-0.5 text-[#2e3f55]">
                <button aria-label="Réduire la figure">
                  <svg viewBox="0 0 10 10" className="h-2.5 w-2.5" fill="none" stroke="currentColor"><path d="M1 6H4V9H1ZM9 1L5 5M5 2V5H8" strokeWidth="1.200" /></svg>
                </button>
                <button aria-label="Agrandir la figure">
                  <svg viewBox="0 0 10 10" className="h-2.5 w-2.5" fill="none" stroke="currentColor"><path d="M4 3H1V9H7V6M4 6L9 1M6 1H9V4" strokeWidth="1.200" /></svg>
                </button>
                <button aria-label="Fermer la figure" className="ml-0.5">
                  <svg viewBox="0 0 10 10" className="h-2.5 w-2.5" fill="none" stroke="currentColor"><path d="M1 1H9V9H1ZM3 3L7 7M7 3L3 7" strokeWidth="1.200" /></svg>
                </button>
              </div>
            </div>
            <Figure />
          </main>
        </div>
        <p className="h-[21px] pt-px leading-3 text-[#1414f0]">Rapporteur : Cliquez un point pour le faire tourner</p>
      </div>
      <StylePanel />
    </div>
  </div>
);

export default App;
